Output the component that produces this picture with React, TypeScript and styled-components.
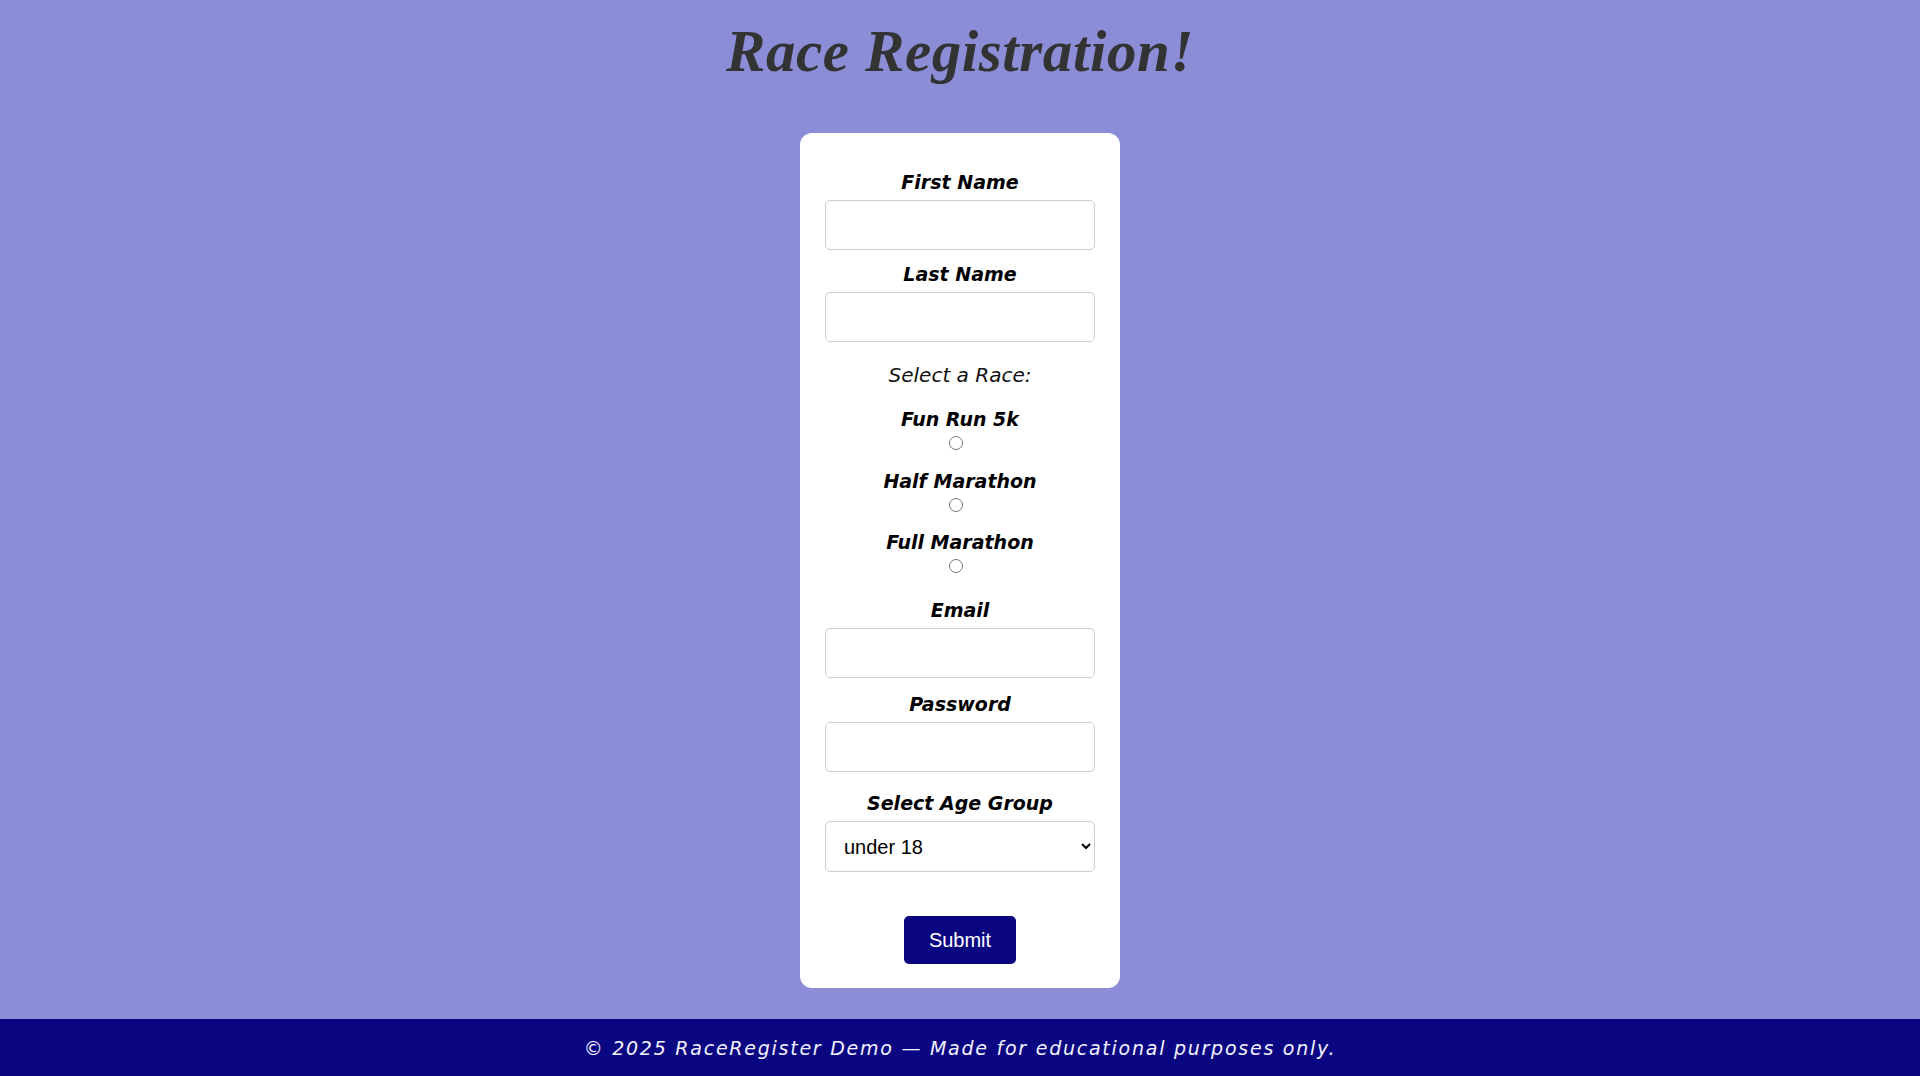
import { createGlobalStyle, styled } from 'styled-components';

const GlobalStyle = createGlobalStyle`
  * {
    box-sizing: border-box;
  }
  body {
    margin: 0;
    background-color: #8b8dd7;
    font-family: 'DejaVu Sans', 'Liberation Sans', sans-serif;
  }
`;

const Page = styled.div`
  min-height: 100vh;
  display: flex;
  flex-direction: column;
`;

const Main = styled.main`
  flex: 1;
  display: flex;
  flex-direction: column;
  align-items: center;
  padding-top: 15px;
`;

const Title = styled.h1`
  margin: 0 0 46px;
  font-family: 'Liberation Serif', 'Times New Roman', serif;
  font-style: italic;
  font-weight: 700;
  font-size: 59px;
  line-height: 72px;
  letter-spacing: 0.6px;
  color: #333333;
`;

const Card = styled.form`
  width: 320px;
  background-color: #ffffff;
  border-radius: 12px;
  padding: 0 25px 24px;
  display: flex;
  flex-direction: column;
  align-items: center;
`;

const Label = styled.label<{ $gap: number }>`
  display: block;
  margin-top: ${(props) => props.$gap}px;
  font-size: 19px;
  line-height: 24px;
  font-weight: 700;
  font-style: italic;
  color: #000000;
  text-align: center;
`;

const Prompt = styled.p`
  margin: 21px 0 0;
  font-size: 20px;
  line-height: 24px;
  font-style: italic;
  color: #111111;
`;

const Field = styled.input`
  width: 270px;
  height: 50px;
  margin-top: 6px;
  border: 1px solid #cccccc;
  border-radius: 5px;
  padding: 0 14px;
  font-size: 18px;
  background-color: #ffffff;
`;

const RadioRow = styled.div`
  display: flex;
  justify-content: center;
  padding-right: 8px;
  margin-top: 5px;
`;

const Radio = styled.input`
  width: 14px;
  height: 14px;
  margin: 0;
`;

const Select = styled.select`
  width: 270px;
  height: 51px;
  margin-top: 6px;
  border: 1px solid #cccccc;
  border-radius: 5px;
  padding: 0 10px 0 14px;
  font-family: 'Liberation Sans', Arial, sans-serif;
  font-size: 20px;
  color: #000000;
  background-color: #ffffff;
`;

const SubmitButton = styled.button`
  margin-top: 44px;
  height: 48px;
  padding: 0 25px;
  border: none;
  border-radius: 5px;
  background-color: #0a0682;
  color: #ffffff;
  font-family: 'Liberation Sans', Arial, sans-serif;
  font-size: 20px;
  cursor: pointer;
`;

const Footer = styled.footer`
  height: 57px;
  background-color: #0a0682;
  display: flex;
  align-items: center;
  justify-content: center;
  color: #f2f2ff;
  font-style: italic;
  font-size: 19px;
  letter-spacing: 1.75px;
`;

const races = [
  { id: 'fun', label: 'Fun Run 5k', gap: 20 },
  { id: 'half', label: 'Half Marathon', gap: 19 },
  { id: 'full', label: 'Full Marathon', gap: 18 },
];

function App() {
  return (
    <Page>
      <GlobalStyle />
      <Main>
        <Title>Race Registration!</Title>
        <Card onSubmit={(e) => e.preventDefault()}>
          <Label $gap={37} htmlFor='first'>
            First Name
          </Label>
          <Field id='first' type='text' />
          <Label $gap={12} htmlFor='last'>
            Last Name
          </Label>
          <Field id='last' type='text' />

          <Prompt>Select a Race:</Prompt>
          {races.map((race) => (
            <div key={race.id}>
              <Label $gap={race.gap} htmlFor={race.id}>
                {race.label}
              </Label>
              <RadioRow>
                <Radio id={race.id} type='radio' name='race' value={race.id} />
              </RadioRow>
            </div>
          ))}

          <Label $gap={25} htmlFor='email'>
            Email
          </Label>
          <Field id='email' type='email' />
          <Label $gap={14} htmlFor='password'>
            Password
          </Label>
          <Field id='password' type='password' />
          <Label $gap={19} htmlFor='age'>
            Select Age Group
          </Label>
          <Select id='age' defaultValue='under18'>
            <option value='under18'>under 18</option>
            <option value='18to39'>18 - 39</option>
            <option value='40plus'>40 and over</option>
          </Select>
          <SubmitButton type='submit'>Submit</SubmitButton>
        </Card>
      </Main>
      <Footer>© 2025 RaceRegister Demo — Made for educational purposes only.</Footer>
    </Page>
  );
}

export default App;
